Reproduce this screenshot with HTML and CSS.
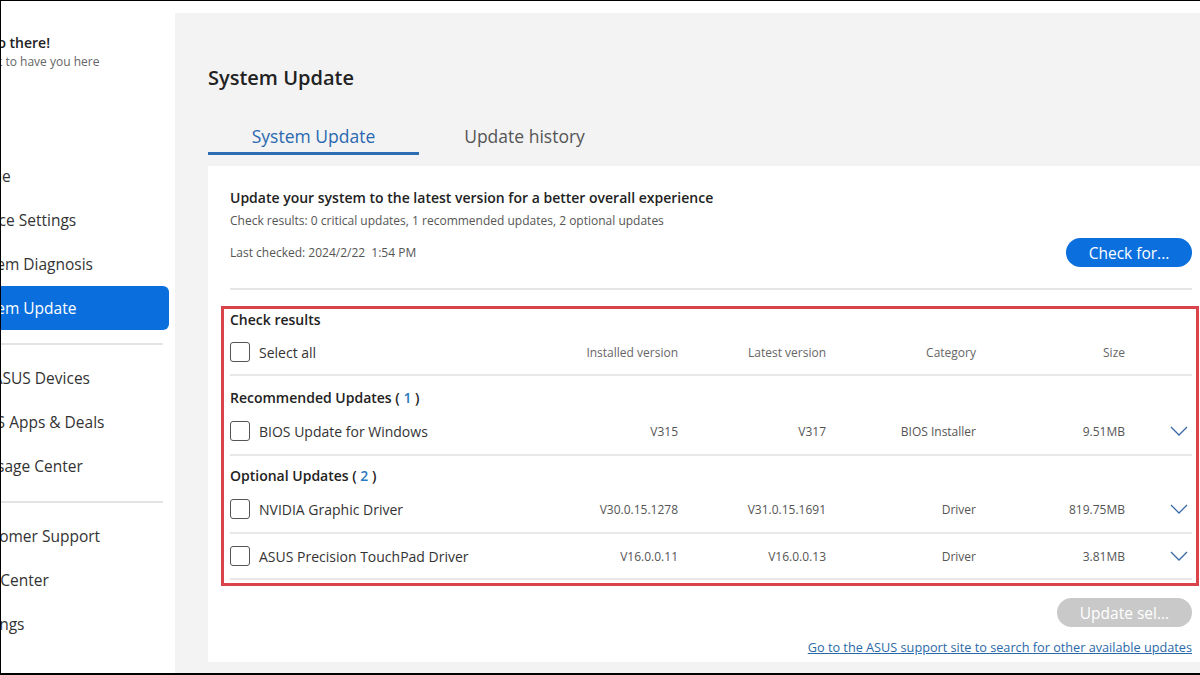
FILE: index.html
```html
<!DOCTYPE html>
<html lang="en">
<head>
    <meta charset="UTF-8">
    <meta name="viewport" content="width=device-width, initial-scale=1.0">
    <title>MyASUS - System Update</title>
    <link rel="stylesheet" href="styles.css">
</head>
<body>
    <div class="app">
        <!-- left menu, cut off by the screenshot -->
        <aside class="sidebar">
            <div class="side-inner">
                <div class="greeting">
                    <p class="hello">Hello there!</p>
                    <p class="welcome">Great to have you here</p>
                </div>
                <nav class="nav">
                    <a class="nav-item">Home</a>
                    <a class="nav-item">Device Settings</a>
                    <a class="nav-item">System Diagnosis</a>
                    <a class="nav-item active">System Update</a>
                    <hr class="nav-sep">
                    <a class="nav-item">My ASUS Devices</a>
                    <a class="nav-item">ASUS Apps &amp; Deals</a>
                    <a class="nav-item">Message Center</a>
                    <hr class="nav-sep">
                    <a class="nav-item">Customer Support</a>
                    <a class="nav-item">Tips Center</a>
                    <a class="nav-item">Settings</a>
                </nav>
            </div>
        </aside>

        <main class="main">
            <h1 class="page-title">System Update</h1>
            <div class="tabs">
                <span class="tab active">System Update</span>
                <span class="tab">Update history</span>
            </div>

            <section class="card">
                <p class="card-title">Update your system to the latest version for a better overall experience</p>
                <p class="card-sub">Check results: 0 critical updates, 1 recommended updates, 2 optional updates</p>
                <div class="check-row">
                    <span class="last-checked">Last checked: 2024/2/22&nbsp; 1:54 PM</span>
                    <button class="btn btn-primary">Check for...</button>
                </div>
                <hr class="divider">

                <div class="results">
                    <p class="results-title">Check results</p>
                    <div class="row head">
                        <label class="name"><span class="checkbox"></span>Select all</label>
                        <span class="col">Installed version</span>
                        <span class="col">Latest version</span>
                        <span class="col">Category</span>
                        <span class="col">Size</span>
                        <span></span>
                    </div>

                    <p class="group-title">Recommended Updates ( <span class="count">1</span> )</p>
                    <div class="row item">
                        <label class="name"><span class="checkbox"></span>BIOS Update for Windows</label>
                        <span class="col">V315</span>
                        <span class="col">V317</span>
                        <span class="col">BIOS Installer</span>
                        <span class="col">9.51MB</span>
                        <svg class="chevron" viewBox="0 0 18 10"><polyline points="1,1 9,9 17,1"/></svg>
                    </div>

                    <p class="group-title">Optional Updates ( <span class="count">2</span> )</p>
                    <div class="row item">
                        <label class="name"><span class="checkbox"></span>NVIDIA Graphic Driver</label>
                        <span class="col">V30.0.15.1278</span>
                        <span class="col">V31.0.15.1691</span>
                        <span class="col">Driver</span>
                        <span class="col">819.75MB</span>
                        <svg class="chevron" viewBox="0 0 18 10"><polyline points="1,1 9,9 17,1"/></svg>
                    </div>
                    <div class="row item last">
                        <label class="name"><span class="checkbox"></span>ASUS Precision TouchPad Driver</label>
                        <span class="col">V16.0.0.11</span>
                        <span class="col">V16.0.0.13</span>
                        <span class="col">Driver</span>
                        <span class="col">3.81MB</span>
                        <svg class="chevron" viewBox="0 0 18 10"><polyline points="1,1 9,9 17,1"/></svg>
                    </div>
                </div>

                <div class="actions">
                    <button class="btn btn-disabled">Update sel...</button>
                </div>
                <a class="support-link" href="#">Go to the ASUS support site to search for other available updates</a>
            </section>
        </main>
    </div>
</body>
</html>
```

FILE: styles.css
```css
*{
    padding: 0;
    margin: 0;
    box-sizing: border-box;
}
body{
    background-color: black;
    font-family: "Open Sans", "Noto Sans", Arial, sans-serif;
    color: #333;
    height: 675px;
    overflow: hidden;
}
.app{
    display: flex;
    height: 672px;
    margin: 1px 0 0 1px;
    background-color: white;
}

/* sidebar */
.sidebar{
    width: 174px;
    flex-shrink: 0;
    background-color: white;
    overflow: hidden;
}
.side-inner{
    margin-left: -34px;
    width: 208px;
}
.greeting{
    padding: 32px 0 0 4px;
    height: 153px;
}
.hello{
    font-size: 14px;
    font-weight: 600;
    color: #222;
    line-height: 20px;
}
.welcome{
    font-size: 12px;
    color: #666;
    line-height: 18px;
}
.nav-item{
    display: block;
    width: 202px;
    height: 44px;
    line-height: 44px;
    font-size: 15.5px;
    color: #333;
    border-radius: 0 6px 6px 0;
}
.nav-item.active{
    background-color: #0a6fdc;
    color: white;
}
.nav-sep{
    border: none;
    height: 2px;
    width: 196px;
    background-color: #e4e4e4;
    margin: 13px 0 11px;
}

/* main area */
.main{
    flex: 1;
    margin-top: 12px;
    background-color: #f3f3f3;
    padding: 0 0 11px 33px;
    display: flex;
    flex-direction: column;
}
.page-title{
    margin-top: 51px;
    font-size: 20px;
    font-weight: 600;
    line-height: 28px;
    color: #222;
}
.tabs{
    display: flex;
    margin-top: 31px;
}
.tab{
    width: 211px;
    text-align: center;
    font-size: 17.5px;
    line-height: 26px;
    padding-bottom: 3px;
    border-bottom: 3px solid transparent;
    color: #555;
}
.tab.active{
    color: #2a68b0;
    font-weight: 500;
    border-bottom-color: #2c6db5;
}

.card{
    flex: 1;
    margin-top: 11px;
    background-color: white;
    padding: 22px 8px 6px 22px;
    display: flex;
    flex-direction: column;
}
.card-title{
    font-size: 14px;
    font-weight: 600;
    line-height: 20px;
    color: #222;
}
.card-sub{
    margin-top: 4px;
    font-size: 12px;
    line-height: 18px;
    color: #555;
}
.check-row{
    margin-top: 8px;
    display: flex;
    justify-content: space-between;
    align-items: center;
}
.last-checked{
    font-size: 12px;
    color: #555;
}
.btn{
    font: inherit;
    border: none;
    border-radius: 15px;
    height: 29px;
    color: white;
    font-size: 15.5px;
}
.btn-primary{
    width: 126px;
    background-color: #0b6fde;
}
.btn-disabled{
    width: 135px;
    background-color: #c9c9c9;
}
.divider{
    border: none;
    height: 2px;
    background-color: #e6e6e6;
    margin-top: 21px;
}

/* check results box (red outline) */
.results{
    margin: 16px -7px 0 -9px;
    border: 3px solid #d8434c;
    padding: 1px 4px 3px 6px;
}
.results-title{
    font-size: 14px;
    font-weight: 600;
    line-height: 20px;
    color: #222;
}
.row{
    display: grid;
    grid-template-columns: 298px 150px 148px 150px 149px 67px;
    align-items: center;
    border-bottom: 2px solid #e8e8e8;
}
.row.head{
    height: 46px;
}
.row.item{
    height: 48px;
}
.row.item.last{
    height: 46px;
}
.name{
    display: flex;
    align-items: center;
    font-size: 14px;
    color: #333;
}
.checkbox{
    width: 20px;
    height: 20px;
    border: 1.5px solid #555;
    border-radius: 3px;
    margin-right: 9px;
}
.col{
    text-align: right;
    font-size: 12px;
    color: #555;
}
.head .col{
    color: #666;
}
.chevron{
    width: 18px;
    height: 10px;
    justify-self: end;
    margin-right: 4px;
    fill: none;
    stroke: #3a6aa6;
    stroke-width: 1.3;
}
.group-title{
    margin-top: 12px;
    font-size: 14px;
    font-weight: 600;
    line-height: 20px;
    color: #222;
}
.row.item + .group-title{
    margin-top: 10px;
}
.count{
    color: #2a7ac0;
}

.actions{
    margin-top: 12px;
    display: flex;
    justify-content: flex-end;
}
.support-link{
    margin-top: 12px;
    align-self: flex-end;
    font-size: 12.7px;
    line-height: 16px;
    color: #2a69a8;
}
```
